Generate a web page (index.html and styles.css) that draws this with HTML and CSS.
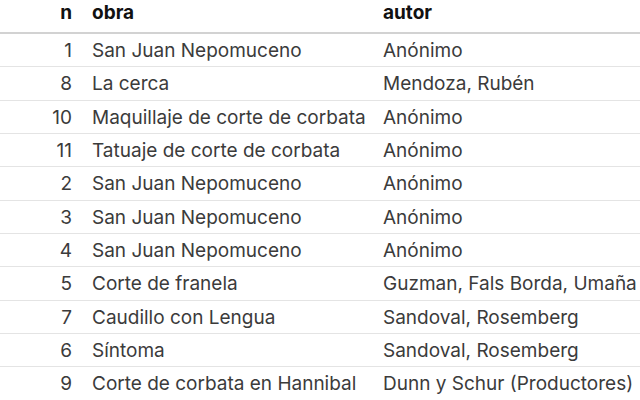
FILE: index.html
```html
<!DOCTYPE html>
<html lang="es">
<head>
<meta charset="utf-8">
<link rel="stylesheet" href="styles.css">
</head>
<body>
<table class="tbl">
  <colgroup><col class="c-n"><col class="c-obra"><col class="c-autor"></colgroup>
  <thead>
    <tr><th class="num">n</th><th>obra</th><th>autor</th></tr>
  </thead>
  <tbody>
    <tr><td class="num">1</td><td>San Juan Nepomuceno</td><td>Anónimo</td></tr>
    <tr><td class="num">8</td><td>La cerca</td><td>Mendoza, Rubén</td></tr>
    <tr><td class="num">10</td><td>Maquillaje de corte de corbata</td><td>Anónimo</td></tr>
    <tr><td class="num">11</td><td>Tatuaje de corte de corbata</td><td>Anónimo</td></tr>
    <tr><td class="num">2</td><td>San Juan Nepomuceno</td><td>Anónimo</td></tr>
    <tr><td class="num">3</td><td>San Juan Nepomuceno</td><td>Anónimo</td></tr>
    <tr><td class="num">4</td><td>San Juan Nepomuceno</td><td>Anónimo</td></tr>
    <tr><td class="num">5</td><td>Corte de franela</td><td>Guzman, Fals Borda, Umaña</td></tr>
    <tr><td class="num">7</td><td>Caudillo con Lengua</td><td>Sandoval, Rosemberg</td></tr>
    <tr><td class="num">6</td><td>Síntoma</td><td>Sandoval, Rosemberg</td></tr>
    <tr><td class="num">9</td><td>Corte de corbata en Hannibal</td><td>Dunn y Schur (Productores)</td></tr>
  </tbody>
</table>
</body>
</html>
```
FILE: styles.css
```css
html, body {
  margin: 0;
  padding: 0;
  background: #fff;
  overflow: hidden;
}
.tbl {
  border-collapse: collapse;
  table-layout: fixed;
  width: 640px;
  font-family: Inter, "Noto Sans", sans-serif;
  font-size: 19px;
  color: #3b3b3b;
}
.c-n { width: 82px; }
.c-obra { width: 291px; }
.c-autor { width: 267px; }
.tbl th {
  text-align: left;
  font-weight: 700;
  color: #111;
  line-height: 26px;
  padding: 0 10px 6px 10px;
  border-bottom: 2px solid #d2d2d2;
  white-space: nowrap;
  overflow: hidden;
}
.tbl td {
  line-height: 26.33px;
  padding: 4px 10px 2px 10px;
  border-bottom: 1px solid #e4e4e4;
  white-space: nowrap;
  overflow: hidden;
}
.tbl td:last-child {
  padding-right: 0;
}
.tbl .num {
  text-align: right;
}
```
